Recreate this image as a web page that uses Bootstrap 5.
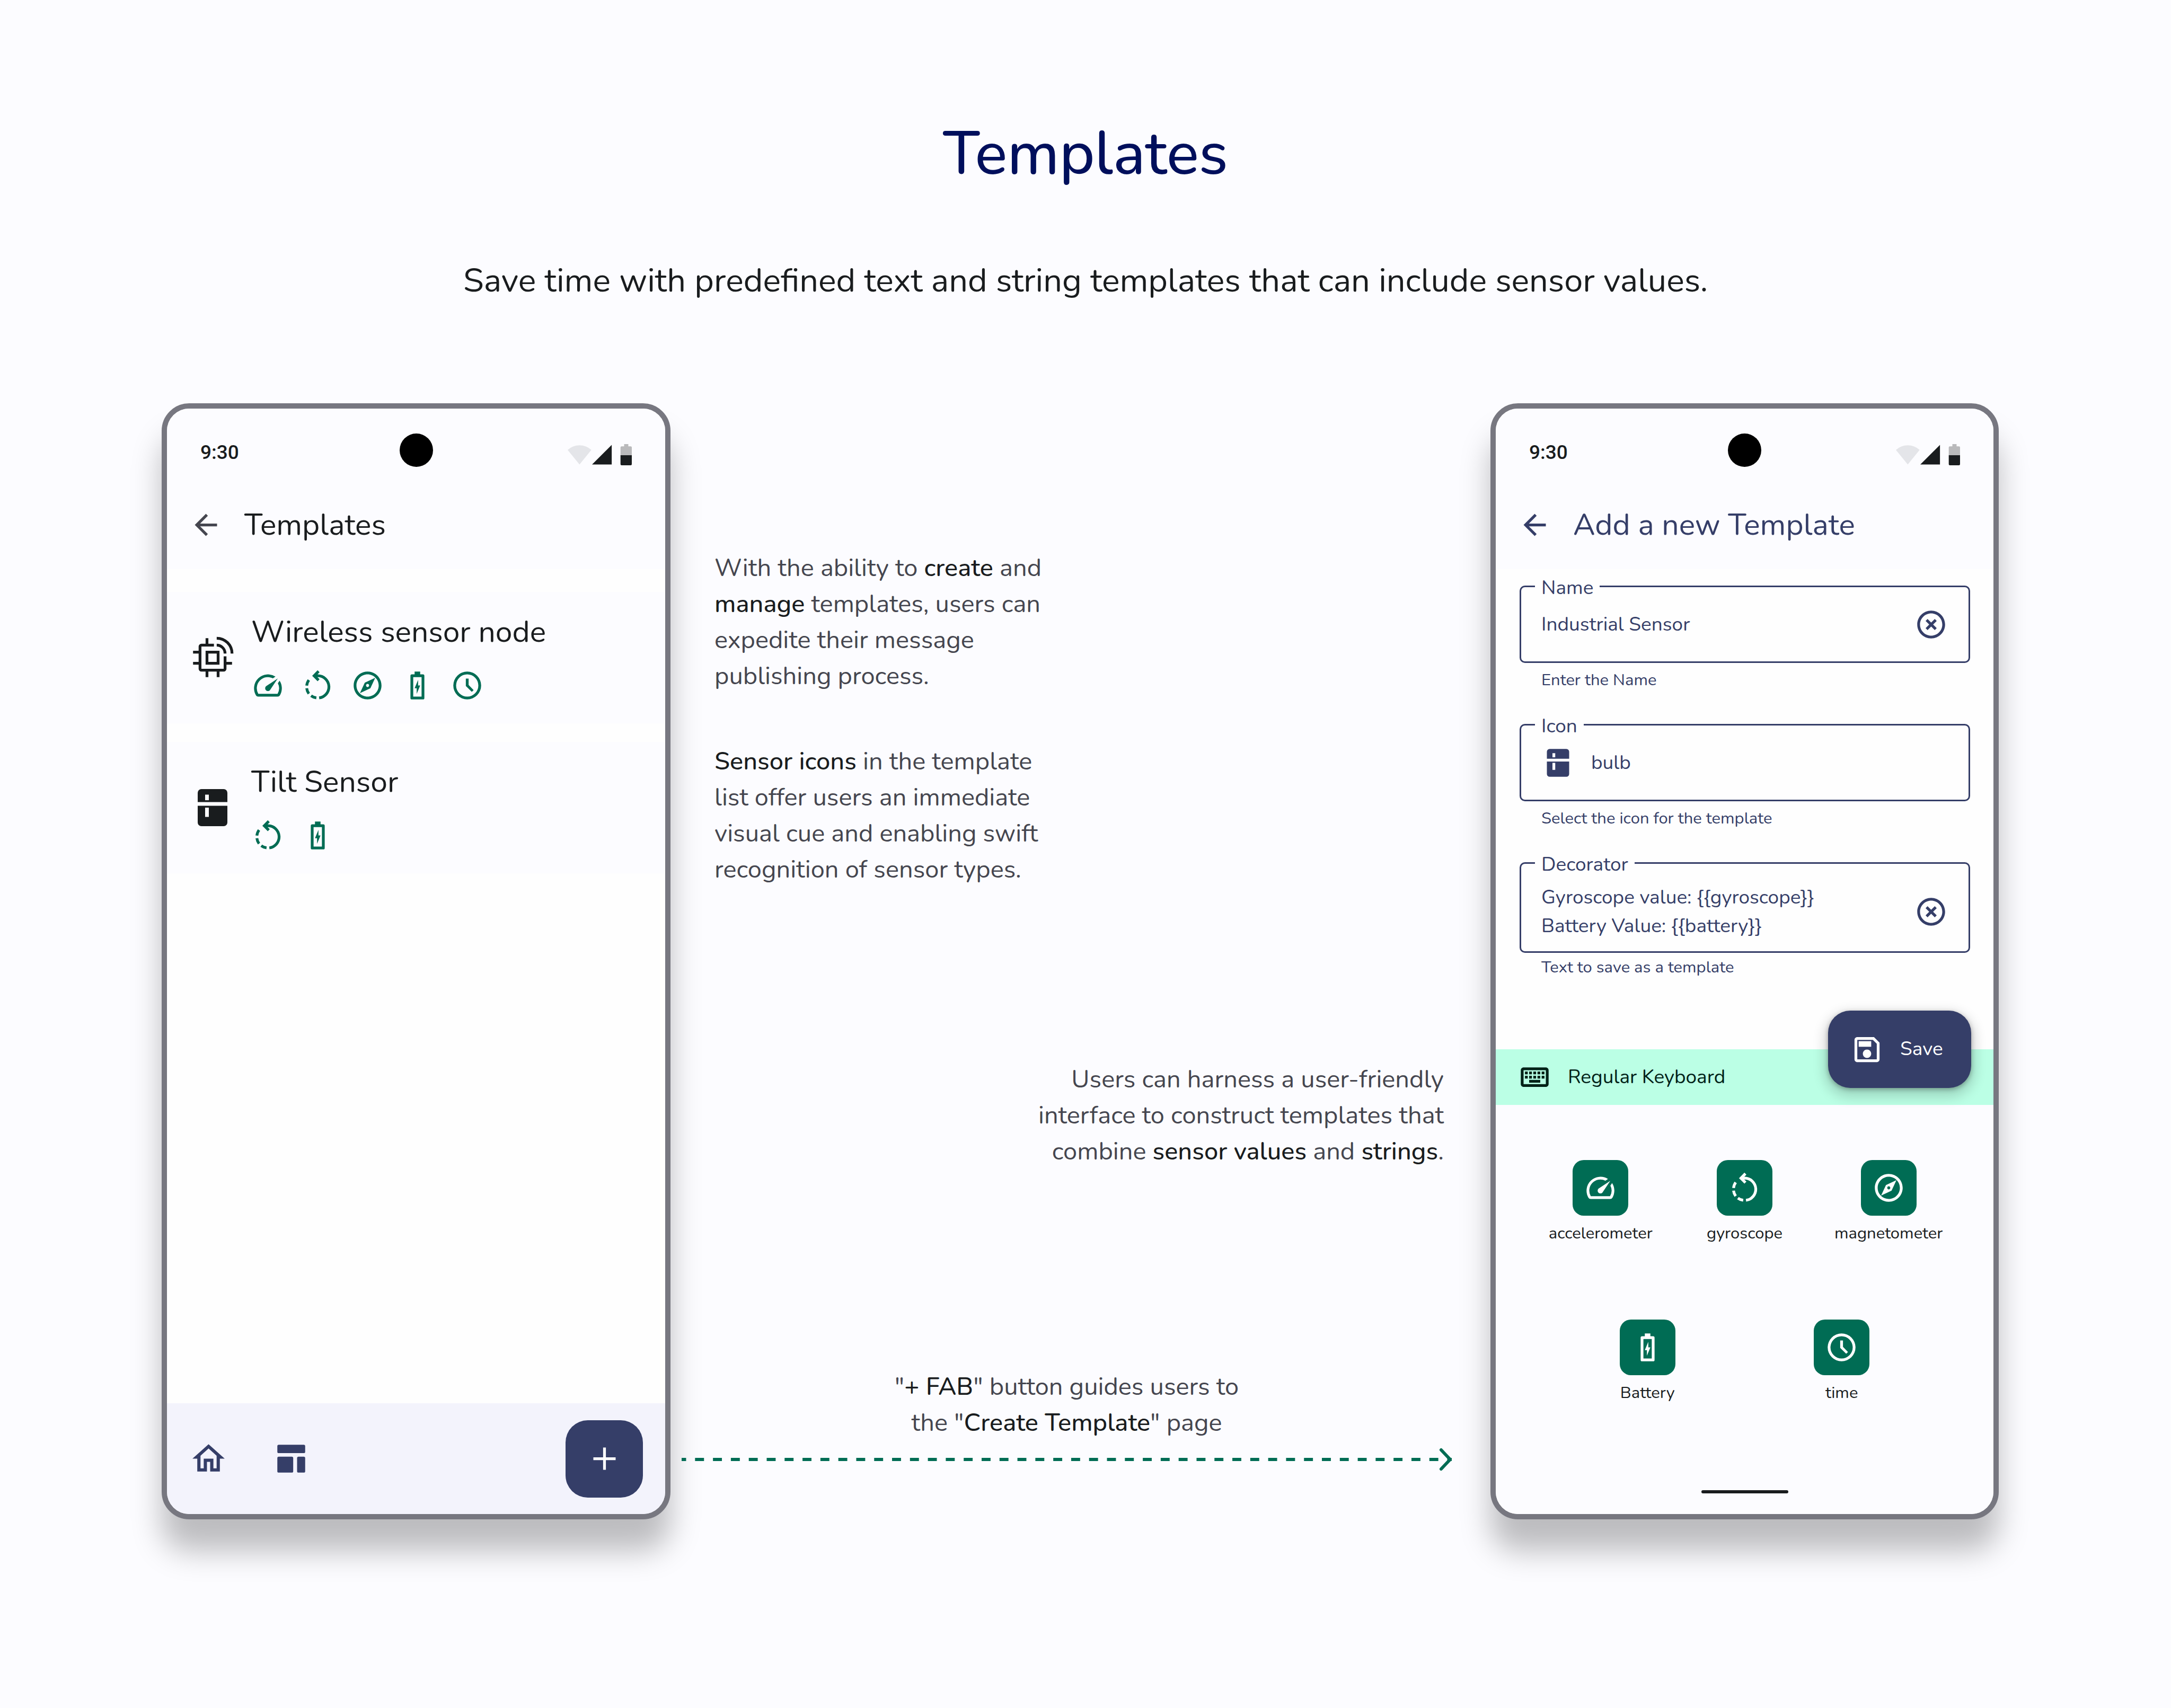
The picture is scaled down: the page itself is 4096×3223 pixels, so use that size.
<!DOCTYPE html>
<html lang="en">
<head>
<meta charset="utf-8">
<meta name="viewport" content="width=device-width, initial-scale=1">
<title>Templates</title>
<link href="https://cdn.jsdelivr.net/npm/bootstrap@5.3.0/dist/css/bootstrap.min.css" rel="stylesheet">
<style>
  :root {
    --navy: #353e68;
    --green: #006c54;
    --ink: #191c1e;
    --surface: #fcfcff;
    --bezel: #777780;
  }
  body { font-family: "Nunito", "Lato", sans-serif; background: var(--surface); color: var(--ink); }
  svg { display: block; flex: none; fill: currentColor; }
  .page { padding: 221px 0 356px; }
  .page-title { font-size: 114px; line-height: 140px; font-weight: 500; color: #000f5c; margin-bottom: 126px; }
  .page-sub { font-size: 63px; line-height: 84px; margin-bottom: 190px; }
  .stage { grid-template-columns: 960fr 1547fr 959fr; padding: 0 325px 0 305px; }

  /* phones */
  .phone { border: 10px solid var(--bezel); border-radius: 52px; background: #fefefe; box-shadow: 0 60px 56px rgba(0, 0, 0, .25); }
  .phone-top { background: var(--surface); border-radius: 42px 42px 0 0; }
  .status { padding: 0 63px; height: 136px; }
  .status-time { font: 500 37px/71px Roboto, sans-serif; padding-top: 47px; }
  .camera { width: 63px; height: 63px; margin-top: 47px; background: #000; }
  .status-icons { padding-top: 67px; }
  .appbar { height: 167px; padding: 0 42px; gap: 41px; }
  .bar-title { font-size: 57px; line-height: 73px; font-weight: 400; margin: 0; }
  .plain-btn { background: none; border: 0; padding: 0; color: inherit; }
  .navy { color: var(--navy); }
  .muted { color: #45464f; }
  .ic { width: 63px; height: 63px; }
  .ic-lg { width: 84px; height: 84px; }

  /* template list */
  .tpl-list { padding-top: 43px; gap: 35px; }
  .tpl { background: var(--surface); padding: 39px 44px 40px; gap: 31px; }
  .tpl-name { font-size: 57px; line-height: 73px; font-weight: 400; margin: 0 0 33px; }
  .tpl-sensors { gap: 31px; color: var(--green); }
  .bottom-nav { height: 209px; padding: 0 42px; background: #f3f3fc; border-radius: 0 0 42px 42px; }
  .nav-pair { gap: 88px; }
  .nav-pair a { color: var(--navy); }
  .home-ic { width: 73px; height: 73px; }
  .fab { width: 146px; height: 146px; border-radius: 42px; background: var(--navy); color: #fff; border: 0; }

  /* annotations */
  .notes { padding: 277px 73px 0 21px; font-size: 47px; line-height: 68px; color: #45464f; }
  .notes p { margin: 0; }
  .notes strong { font-weight: 500; color: var(--ink); }
  .note-left { padding-left: 62px; }
  .note-left p + p { margin-top: 93px; }
  .note-right { padding: 328px 15px 376px 0; }
  .flow-arrow { width: 100%; height: 42px; margin-top: 14px; overflow: visible; stroke: var(--green); }

  /* form */
  .tpl-form { padding: 31px 44px 134px 45px; color: var(--navy); }
  .field { margin-bottom: 62px; }
  .field:last-child { margin-bottom: 0; }
  .field-box { position: relative; border: 3px solid var(--navy); border-radius: 10px; padding: 0 39px 0 38px; min-height: 146px; }
  .field-box label { position: absolute; left: 26px; top: -19px; padding: 0 12px; background: #fefefe; font-size: 37px; line-height: 40px; }
  .field-box input, .field-box textarea, .field-box select {
    appearance: none; border: 0; background: none; outline: 0; padding: 0; margin: 0; color: inherit;
    font: inherit; font-size: 37px; line-height: 54px; flex: 1; min-width: 0; resize: none; overflow: hidden; }
  .field-icon { margin-right: 31px; }
  .field-tall { padding-top: 36px; padding-bottom: 21px; }
  .field-tall textarea { height: 108px; }
  .hint { font-size: 31px; line-height: 42px; padding-left: 41px; margin-top: 11px; }
  .hint-tight { margin-top: 6px; }

  /* keyboard */
  .kb-band { position: relative; height: 105px; padding: 0 42px; gap: 31px; background: #bbffe5; color: #002117; font-size: 37px; }
  .save-btn { position: absolute; right: 42px; bottom: 32px; width: 270px; height: 146px; border: 0; border-radius: 42px;
    padding: 0 42px; background: var(--navy); color: #fff; font-size: 37px; gap: 31px;
    box-shadow: 0 3px 8px rgba(0, 0, 0, .3), 0 10px 21px 8px rgba(0, 0, 0, .15); }
  .keypad { background: var(--surface); padding-top: 104px; border-radius: 0 0 42px 42px; }
  .key-row { padding: 0 62px; margin-bottom: 142px; }
  .key-row-two { padding: 0 103px; margin-bottom: 163px; }
  .key { flex: 1 1 0; font-size: 31px; line-height: 42px; gap: 12px; }
  .key-tile { width: 105px; height: 105px; border-radius: 21px; background: var(--green); color: #fff; }
  .home-bar { width: 164px; height: 6px; border-radius: 3px; background: var(--ink); margin: 0 auto 39px; }
</style>
<script src="https://cdn.jsdelivr.net/npm/bootstrap@5.3.0/dist/js/bootstrap.bundle.min.js"></script>
</head>
<body>

<svg width="0" height="0" class="position-absolute" aria-hidden="true">
  <symbol id="i-back" viewBox="0 0 24 24"><path d="M20 11H7.83l5.59-5.59L12 4l-8 8 8 8 1.41-1.41L7.83 13H20v-2z"/></symbol>
  <symbol id="i-speed" viewBox="0 0 24 24"><path d="M20.38 8.57l-1.23 1.85a8 8 0 0 1-.22 7.58H5.07A8 8 0 0 1 15.58 6.85l1.85-1.23A10 10 0 0 0 3.35 19a2 2 0 0 0 1.72 1h13.85a2 2 0 0 0 1.74-1 10 10 0 0 0-.27-10.44zm-9.79 6.84a2 2 0 0 0 2.83 0l5.66-8.49-8.49 5.66a2 2 0 0 0 0 2.83z"/></symbol>
  <symbol id="i-gyro" viewBox="0 0 24 24"><path fill="none" stroke="currentColor" stroke-width="2" d="M12.6 1.8L9.4 5l3.2 3.2M9.4 5H12a8 8 0 0 1 1 15.94M4.06 12.1a8 8 0 0 1 1.54-4M4.06 14a8 8 0 0 0 1.54 3.9M7.2 19.4a8 8 0 0 0 3.8 1.54"/></symbol>
  <symbol id="i-compass" viewBox="0 0 24 24"><path d="M12 2C6.48 2 2 6.48 2 12s4.48 10 10 10 10-4.48 10-10S17.52 2 12 2zm0 18c-4.41 0-8-3.59-8-8s3.59-8 8-8 8 3.59 8 8-3.59 8-8 8zm-5.5-2.5l7.51-3.49L17.5 6.5 9.99 9.99 6.5 17.5zm5.5-6.6c.61 0 1.1.49 1.1 1.1s-.49 1.1-1.1 1.1-1.1-.49-1.1-1.1.49-1.1 1.1-1.1z"/></symbol>
  <symbol id="i-battery" viewBox="0 0 24 24"><path fill-rule="evenodd" d="M10 2h4v2h2a1 1 0 0 1 1 1v16a1 1 0 0 1-1 1H8a1 1 0 0 1-1-1V5a1 1 0 0 1 1-1h2zM9 6v14h6V6zM12.5 8v4H14l-2.5 6v-4H10z"/></symbol>
  <symbol id="i-clock" viewBox="0 0 24 24"><path d="M12 2a10 10 0 1 0 0 20 10 10 0 0 0 0-20zm0 18a8 8 0 1 1 0-16 8 8 0 0 1 0 16z"/><path d="M11 7h2v4.6l3.6 3.7-1.3 1.3-4.3-4.2z"/></symbol>
  <symbol id="i-chip" viewBox="0 0 32 32"><path fill="none" stroke="currentColor" stroke-width="2" d="M17 7H8a1 1 0 0 0-1 1v16a1 1 0 0 0 1 1h16a1 1 0 0 0 1-1v-9M12 12h8v8h-8zM12 2v5M12 25v5M20 25v5M2 12h5M2 20h5M25 20h5M19 2a11 11 0 0 1 11 11M19 7a6 6 0 0 1 6 6"/></symbol>
  <symbol id="i-fridge" viewBox="0 0 24 24"><path fill-rule="evenodd" d="M6 2h12a2 2 0 0 1 2 2v5H4V4a2 2 0 0 1 2-2zM8 5v3h2V5zM4 11h16v9a2 2 0 0 1-2 2H6a2 2 0 0 1-2-2zM8 12v5h2v-5z"/></symbol>
  <symbol id="i-home" viewBox="0 0 24 24"><path d="M12 5.69l5 4.5V18h-2v-6H9v6H7v-7.81l5-4.5M12 3L2 12h3v8h6v-6h2v6h6v-8h3L12 3z"/></symbol>
  <symbol id="i-tpl" viewBox="0 0 24 24"><rect x="2" y="2" width="20" height="6" rx="1"/><rect x="2" y="10.6" width="11.4" height="11.4" rx="1"/><rect x="16.2" y="10.6" width="5.8" height="11.4" rx="1"/></symbol>
  <symbol id="i-plus" viewBox="0 0 24 24"><path d="M11 4h2v7h7v2h-7v7h-2v-7H4v-2h7z"/></symbol>
  <symbol id="i-clear" viewBox="0 0 24 24"><path d="M14.59 8L12 10.59 9.41 8 8 9.41 10.59 12 8 14.59 9.41 16 12 13.41 14.59 16 16 14.59 13.41 12 16 9.41 14.59 8zM12 2C6.47 2 2 6.47 2 12s4.47 10 10 10 10-4.47 10-10S17.53 2 12 2zm0 18c-4.41 0-8-3.59-8-8s3.59-8 8-8 8 3.59 8 8-3.59 8-8 8z"/></symbol>
  <symbol id="i-keyboard" viewBox="0 0 24 24"><path d="M20 7v10H4V7h16m0-2H4c-1.1 0-1.99.9-1.99 2L2 17c0 1.1.9 2 2 2h16c1.1 0 2-.9 2-2V7c0-1.1-.9-2-2-2zm-9 3h2v2h-2V8zm0 3h2v2h-2v-2zM8 8h2v2H8V8zm0 3h2v2H8v-2zm-3 0h2v2H5v-2zm0-3h2v2H5V8zm3 6h8v2H8v-2zm6-3h2v2h-2v-2zm0-3h2v2h-2V8zm3 3h2v2h-2v-2zm0-3h2v2h-2V8z"/></symbol>
  <symbol id="i-save" viewBox="0 0 24 24"><path d="M17 3H5c-1.1 0-2 .9-2 2v14c0 1.1.9 2 2 2h14c1.1 0 2-.9 2-2V7l-4-4zm2 16H5V5h11.17L19 7.83V19zm-7-7c-1.66 0-3 1.34-3 3s1.34 3 3 3 3-1.34 3-3-1.34-3-3-3zM6 6h9v4H6V6z"/></symbol>
  <symbol id="i-status" viewBox="0 0 46 15.2"><path fill="#e4e5e9" d="M0 4.2a12.5 12.5 0 0 1 17 0L8.500 14.600z"/><path d="M17.500 14.600L31.600.6v14z"/><path fill="#b9b9bb" d="M40.500 0h3v1.600h1.700a.8.8 0 0 1 .8.8V8h-8.100V2.400a.8.8 0 0 1 .8-.8h1.800z"/><path d="M37.900 8H46v6.400a.8.8 0 0 1-.8.8h-6.500a.8.8 0 0 1-.8-.8z"/></symbol>
</svg>

<main class="page">
  <header class="text-center">
    <h1 class="page-title">Templates</h1>
    <p class="page-sub">Save time with predefined text and string templates that can include sensor values.</p>
  </header>

  <div class="stage d-grid">

    <section class="phone d-flex flex-column" aria-label="Templates list">
      <div class="phone-top">
        <div class="status d-flex align-items-start justify-content-between">
          <div class="status-time col">9:30</div>
          <div class="camera rounded-circle"></div>
          <div class="status-icons col d-flex justify-content-end"><svg width="121" height="40"><use href="#i-status"/></svg></div>
        </div>
        <div class="appbar d-flex align-items-center">
          <button type="button" class="plain-btn muted" aria-label="Back"><svg class="ic"><use href="#i-back"/></svg></button>
          <h2 class="bar-title">Templates</h2>
        </div>
      </div>
      <div class="tpl-list d-flex flex-column">
        <article class="tpl d-flex align-items-center">
          <svg class="ic-lg"><use href="#i-chip"/></svg>
          <div>
            <h3 class="tpl-name">Wireless sensor node</h3>
            <div class="tpl-sensors d-flex">
              <svg class="ic"><use href="#i-speed"/></svg>
              <svg class="ic"><use href="#i-gyro"/></svg>
              <svg class="ic"><use href="#i-compass"/></svg>
              <svg class="ic"><use href="#i-battery"/></svg>
              <svg class="ic"><use href="#i-clock"/></svg>
            </div>
          </div>
        </article>
        <article class="tpl d-flex align-items-center">
          <svg class="ic-lg"><use href="#i-fridge"/></svg>
          <div>
            <h3 class="tpl-name">Tilt Sensor</h3>
            <div class="tpl-sensors d-flex">
              <svg class="ic"><use href="#i-gyro"/></svg>
              <svg class="ic"><use href="#i-battery"/></svg>
            </div>
          </div>
        </article>
      </div>
      <nav class="bottom-nav mt-auto d-flex align-items-center justify-content-between">
        <div class="nav-pair d-flex align-items-center">
          <a href="#home" aria-label="Home"><svg class="home-ic"><use href="#i-home"/></svg></a>
          <a href="#templates" aria-label="Templates"><svg class="ic"><use href="#i-tpl"/></svg></a>
        </div>
        <button type="button" class="fab d-flex align-items-center justify-content-center" aria-label="Create template"><svg class="ic"><use href="#i-plus"/></svg></button>
      </nav>
    </section>

    <section class="notes">
      <div class="note-left">
        <p>With the ability to <strong>create</strong> and<br><strong>manage</strong> templates, users can<br>expedite their message<br>publishing process.</p>
        <p><strong>Sensor icons</strong> in the template<br>list offer users an immediate<br>visual cue and enabling swift<br>recognition of sensor types.</p>
      </div>
      <div class="note-right text-end">
        <p>Users can harness a user-friendly<br>interface to construct templates that<br>combine <strong>sensor values</strong> and <strong>strings</strong>.</p>
      </div>
      <p class="text-center">"<strong>+ FAB</strong>" button guides users to<br>the "<strong>Create Template</strong>" page</p>
      <svg class="flow-arrow" aria-hidden="true">
        <line x1="0" y1="21" x2="100%" y2="21" stroke-width="6" pathLength="86" stroke-dasharray="1 1" stroke-dashoffset="0.5"/>
        <svg x="100%" overflow="visible"><path fill="none" d="M-20 3L-3 21L-20 39" stroke-width="6" stroke-linecap="round" stroke-linejoin="round"/></svg>
      </svg>
    </section>

    <section class="phone d-flex flex-column" aria-label="Add a new template">
      <div class="phone-top">
        <div class="status d-flex align-items-start justify-content-between">
          <div class="status-time col">9:30</div>
          <div class="camera rounded-circle"></div>
          <div class="status-icons col d-flex justify-content-end"><svg width="121" height="40"><use href="#i-status"/></svg></div>
        </div>
        <div class="appbar d-flex align-items-center navy">
          <button type="button" class="plain-btn" aria-label="Back"><svg class="ic"><use href="#i-back"/></svg></button>
          <h2 class="bar-title">Add a new Template</h2>
        </div>
      </div>
      <form class="tpl-form">
        <div class="field">
          <div class="field-box d-flex align-items-center">
            <label for="f-name">Name</label>
            <input id="f-name" type="text" value="Industrial Sensor">
            <button type="button" class="plain-btn" aria-label="Clear name"><svg class="ic"><use href="#i-clear"/></svg></button>
          </div>
          <div class="hint">Enter the Name</div>
        </div>
        <div class="field">
          <div class="field-box d-flex align-items-center">
            <label for="f-icon">Icon</label>
            <svg class="ic field-icon"><use href="#i-fridge"/></svg>
            <select id="f-icon"><option>bulb</option></select>
          </div>
          <div class="hint">Select the icon for the template</div>
        </div>
        <div class="field">
          <div class="field-box field-tall d-flex align-items-center">
            <label for="f-deco">Decorator</label>
            <textarea id="f-deco" rows="2">Gyroscope value: {{gyroscope}}
Battery Value: {{battery}}</textarea>
            <button type="button" class="plain-btn" aria-label="Clear decorator"><svg class="ic"><use href="#i-clear"/></svg></button>
          </div>
          <div class="hint hint-tight">Text to save as a template</div>
        </div>
      </form>
      <div class="kb-band d-flex align-items-center">
        <svg class="ic"><use href="#i-keyboard"/></svg>
        <span>Regular Keyboard</span>
        <button type="button" class="save-btn d-flex align-items-center"><svg class="ic"><use href="#i-save"/></svg>Save</button>
      </div>
      <div class="keypad flex-grow-1 d-flex flex-column">
        <div class="key-row d-flex">
          <button type="button" class="key plain-btn d-flex flex-column align-items-center"><span class="key-tile d-flex align-items-center justify-content-center"><svg class="ic"><use href="#i-speed"/></svg></span>accelerometer</button>
          <button type="button" class="key plain-btn d-flex flex-column align-items-center"><span class="key-tile d-flex align-items-center justify-content-center"><svg class="ic"><use href="#i-gyro"/></svg></span>gyroscope</button>
          <button type="button" class="key plain-btn d-flex flex-column align-items-center"><span class="key-tile d-flex align-items-center justify-content-center"><svg class="ic"><use href="#i-compass"/></svg></span>magnetometer</button>
        </div>
        <div class="key-row key-row-two d-flex">
          <button type="button" class="key plain-btn d-flex flex-column align-items-center"><span class="key-tile d-flex align-items-center justify-content-center"><svg class="ic"><use href="#i-battery"/></svg></span>Battery</button>
          <button type="button" class="key plain-btn d-flex flex-column align-items-center"><span class="key-tile d-flex align-items-center justify-content-center"><svg class="ic"><use href="#i-clock"/></svg></span>time</button>
        </div>
        <div class="home-bar mt-auto"></div>
      </div>
    </section>

  </div>
</main>
</body>
</html>
